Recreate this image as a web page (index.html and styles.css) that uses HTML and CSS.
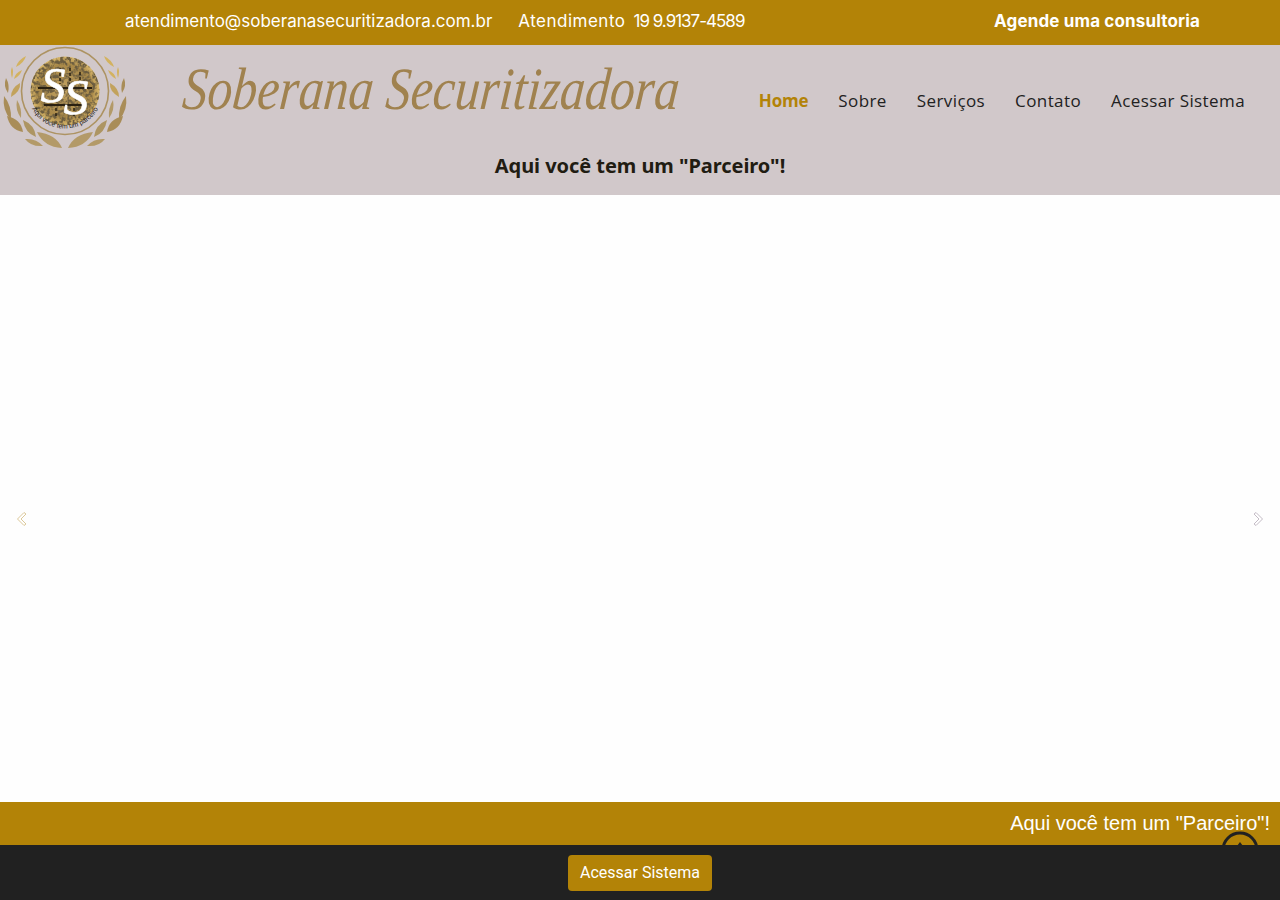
FILE: index.html
```html
<!DOCTYPE html>
<html lang="pt-BR">
<head>
  <meta charset="UTF-8" />
  <meta name="viewport" content="width=device-width, initial-scale=1.0"/>
  <title>Soberana Securitizadora</title>
  <link rel="stylesheet" href="styles.css">
</head>
<body>

  <div class="topbar">
    <div class="topbar-contact">
      <span>atendimento@soberanasecuritizadora.com.br</span>
      <span class="topbar-phone"><span>Atendimento</span> <span class="phone-number">19 9.9137-4589</span></span>
    </div>
    <a class="topbar-cta" href="#">Agende uma consultoria</a>
  </div>

  <header class="site-header">
    <div class="header-row">
      <svg class="logo" viewBox="0 45 130 105" width="130" height="105">
        <defs>
          <radialGradient id="coin" cx="50%" cy="50%" r="52%">
            <stop offset="0" stop-color="#c4a463"/>
            <stop offset="0.75" stop-color="#a88848"/>
            <stop offset="1" stop-color="#e4c272"/>
          </radialGradient>
          <filter id="grain" x="0" y="0" width="100%" height="100%">
            <feTurbulence type="fractalNoise" baseFrequency="0.28" numOctaves="2" seed="7"/>
            <feColorMatrix values="0 0 0 0 0.15  0 0 0 0 0.11  0 0 0 0 0.05  3 3 0 0 -2.6"/>
          </filter>
          <clipPath id="coinClip"><circle cx="65" cy="91" r="34.5"/></clipPath>
          <path id="ringText" d="M27.5 91 A37.5 37.5 0 0 0 102.5 91"/>
          <g id="leaves">
            <path d="M25 139 Q36 138 43 146 Q31 147 25 139Z" fill="#b39a68"/>
            <path d="M37 132 Q56 134 62 148 Q44 147 37 132Z" fill="#b39a68"/>
            <path d="M23 120 Q35 125 36 137 Q25 133 23 120Z" fill="#ad9562"/>
            <path d="M7 116 Q21 119 23 132 Q10 130 7 116Z" fill="#a98d58"/>
            <path d="M4 96 Q12 106 11 120 Q2 110 4 96Z" fill="#a98d58"/>
            <path d="M17 100 Q22 108 21 118 Q15 110 17 100Z" fill="#b39a68"/>
            <path d="M6 78 Q10 85 8 93 Q3 86 6 78Z" fill="#a98d58"/>
            <path d="M20 83 Q21 91 11 97 Q11 88 20 83Z" fill="#c2a25c"/>
            <path d="M12 67 Q14 72 12 78 Q10 72 12 67Z" fill="#d3b25f"/>
            <path d="M22 70 Q20 76 14 79 Q15 73 22 70Z" fill="#d3b25f"/>
            <path d="M26 56 Q24 63 16 67 Q18 60 26 56Z" fill="#d3b25f"/>
          </g>
        </defs>
        <use href="#leaves"/>
        <use href="#leaves" transform="translate(130 0) scale(-1 1)"/>
        <circle cx="65" cy="91" r="43.5" fill="none" stroke="#ad9362" stroke-width="1.6"/>
        <circle cx="65" cy="91" r="34.5" fill="url(#coin)"/>
        <g clip-path="url(#coinClip)">
          <rect x="30" y="56" width="70" height="70" filter="url(#grain)"/>
          <path d="M38 88 H92 M44 105 H86" stroke="#2a2010" stroke-width="2" fill="none"/>
          <path d="M50 72 V84 M60 68 V84 M70 68 V84 M80 72 V84 M56 108 V118 M74 108 V118" stroke="#2a2010" stroke-width="1.5" stroke-dasharray="3 2" fill="none"/>
        </g>
        <text class="logo-ss" x="53" y="102">S</text>
        <text class="logo-ss" x="76" y="114">S</text>
        <text class="logo-ring"><textPath href="#ringText" startOffset="50%" text-anchor="middle">Aqui você tem um parceiro</textPath></text>
      </svg>
      <div class="brand">Soberana Securitizadora</div>
      <nav class="main-nav">
        <a class="active" href="#">Home</a>
        <a href="#">Sobre</a>
        <a href="#">Serviços</a>
        <a href="#">Contato</a>
        <a href="#">Acessar Sistema</a>
      </nav>
    </div>
    <div class="tagline">Aqui você tem um "Parceiro"!</div>
  </header>

  <main class="hero">
    <svg class="arrow" viewBox="0 0 12 16" width="12" height="16">
      <path d="M9 1.5 L2.5 8 L9 14.5 L11 13 L6 8 L11 3 Z" fill="#fff" stroke="#dcc99a" stroke-width="1"/>
    </svg>
    <svg class="arrow" viewBox="0 0 12 16" width="12" height="16">
      <path d="M3 1.5 L9.5 8 L3 14.5 L1 13 L6 8 L1 3 Z" fill="#fff" stroke="#c4bcc6" stroke-width="1"/>
    </svg>
  </main>

  <div class="marquee">Aqui você tem um "Parceiro"!</div>

  <footer class="site-footer">
    <a class="footer-btn" href="#">Acessar Sistema</a>
  </footer>

  <a class="back-top" href="#">
    <svg viewBox="0 0 40 40" width="40" height="40">
      <circle cx="20" cy="19" r="17" fill="none" stroke="#212121" stroke-width="3"/>
      <path d="M20 11 L8 27 H32 Z" fill="#212121"/>
    </svg>
  </a>

</body>
</html>
```

FILE: styles.css
```css
body {
  margin: 0;
  height: 900px;
  overflow: hidden;
  position: relative;
  display: flex;
  flex-direction: column;
  background: #fff;
  font-family: 'Open Sans', sans-serif;
}

a {
  text-decoration: none;
  color: inherit;
}

.topbar {
  height: 45px;
  flex: none;
  background: #b38307;
  color: #fff;
  display: flex;
  align-items: center;
  justify-content: space-between;
  padding: 0 80px 3px 125px;
  box-sizing: border-box;
  font-family: Inter, sans-serif;
  font-size: 17px;
}

.topbar-contact {
  display: flex;
  gap: 26px;
}

.topbar-phone {
  display: flex;
  gap: 8px;
  letter-spacing: 0.5px;
}

.phone-number {
  letter-spacing: -1px;
}

.topbar-cta {
  font-weight: 700;
  letter-spacing: 0.15px;
}

.site-header {
  height: 150px;
  flex: none;
  background: #d1c8ca;
}

.header-row {
  height: 105px;
  display: flex;
  align-items: flex-start;
  padding-right: 35px;
}

.logo {
  flex: none;
}

.brand {
  margin: 9px 0 0 53px;
  font-family: 'Liberation Serif', serif;
  font-style: italic;
  font-size: 60px;
  line-height: 70px;
  color: #a0824f;
  white-space: nowrap;
  width: 496px;
  transform: scaleX(0.83) skewX(-6deg);
  transform-origin: left;
}

.logo-ss {
  font-family: 'Liberation Serif', serif;
  font-style: italic;
  font-size: 50px;
  fill: #fff;
  stroke: #fff;
  stroke-width: 0.6px;
  text-anchor: middle;
}

.logo-ring {
  font-family: 'Liberation Sans', sans-serif;
  font-size: 6.8px;
  fill: #1d1a14;
}

.main-nav {
  margin-left: auto;
  margin-top: 44px;
  display: flex;
  gap: 30px;
  font-size: 17px;
  line-height: 24px;
  letter-spacing: 0.4px;
  color: #212121;
}

.main-nav a.active {
  color: #b38307;
  font-weight: 700;
  letter-spacing: -0.2px;
}

.tagline {
  text-align: center;
  font-family: 'Noto Sans', sans-serif;
  font-size: 20px;
  font-weight: 700;
  line-height: 32px;
  letter-spacing: -0.05px;
  color: #211c12;
}

.hero {
  flex: 1;
  background: #fefefe;
  display: flex;
  align-items: center;
  justify-content: space-between;
  padding: 41px 15px 0;
}

.marquee {
  height: 43px;
  flex: none;
  background: #b38307;
  color: #fff;
  font-family: 'Liberation Sans', sans-serif;
  font-size: 20px;
  line-height: 43px;
  text-align: right;
  padding-right: 10px;
}

.site-footer {
  height: 55px;
  flex: none;
  background: #212121;
  display: flex;
  align-items: center;
  justify-content: center;
  position: relative;
  z-index: 2;
}

.footer-btn {
  background: #b38307;
  color: #fff;
  font-family: Roboto, sans-serif;
  font-size: 16px;
  line-height: 24px;
  padding: 6px 12px;
  border-radius: 4px;
}

.back-top {
  position: absolute;
  right: 20px;
  bottom: 29px;
  width: 40px;
  height: 40px;
  z-index: 1;
}
```
